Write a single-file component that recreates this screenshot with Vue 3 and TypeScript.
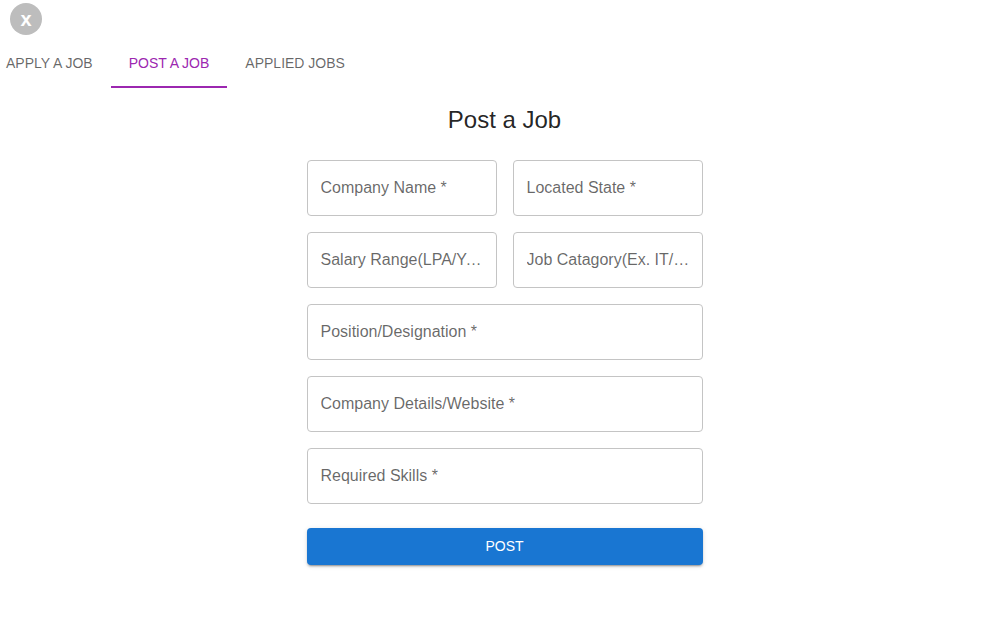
<script setup lang="ts">
import { reactive, ref } from 'vue'

interface Field {
  id: string
  label: string
  wide: boolean
}

const tabs: string[] = ['Apply a Job', 'Post a Job', 'Applied Jobs']
const active = ref(1)

const fields: Field[] = [
  { id: 'company', label: 'Company Name', wide: false },
  { id: 'state', label: 'Located State', wide: false },
  { id: 'salary', label: 'Salary Range(LPA/Year)', wide: false },
  { id: 'category', label: 'Job Catagory(Ex. IT/Bank)', wide: false },
  { id: 'position', label: 'Position/Designation', wide: true },
  { id: 'details', label: 'Company Details/Website', wide: true },
  { id: 'skills', label: 'Required Skills', wide: true },
]
const values = reactive<Record<string, string>>({})
</script>

<template>
  <div class="page">
    <header class="top">
      <div class="avatar">x</div>
    </header>
    <div class="tabs" role="tablist">
      <button
        v-for="(tab, i) in tabs"
        :key="tab"
        type="button"
        role="tab"
        class="tab"
        :class="{ active: i === active }"
        :aria-selected="i === active"
        @click="active = i"
      >{{ tab }}</button>
    </div>
    <main class="content">
      <h1 class="title">Post a Job</h1>
      <form class="form" @submit.prevent>
        <div class="grid">
          <div v-for="f in fields" :key="f.id" class="field" :class="{ wide: f.wide }">
            <input :id="f.id" v-model="values[f.id]" class="input" type="text" placeholder=" " required />
            <label :for="f.id" class="label">{{ f.label }}&nbsp;*</label>
          </div>
        </div>
        <button type="submit" class="submit">Post</button>
      </form>
    </main>
  </div>
</template>

<style>
body {
  margin: 0;
  background: #fff;
}
</style>

<style scoped>
.page {
  font-family: "Liberation Sans", Arial, sans-serif;
  color: rgba(0, 0, 0, 0.87);
}
.top {
  padding: 3px 10px 4px;
}
.avatar {
  display: flex;
  align-items: center;
  justify-content: center;
  width: 32px;
  height: 32px;
  border-radius: 50%;
  background: #bdbdbd;
  color: #fff;
  font-size: 20px;
  font-weight: 700;
  line-height: 20px;
}
.tabs {
  display: flex;
  height: 49px;
  overflow: hidden;
}
.tab {
  box-sizing: border-box;
  flex: none;
  padding: 0 18px;
  border: 0;
  border-bottom: 2px solid transparent;
  background: none;
  color: rgba(0, 0, 0, 0.6);
  font: 400 14px/18px "Liberation Sans", Arial, sans-serif;
  text-transform: uppercase;
  cursor: pointer;
}
.tab:first-child {
  padding-left: 6px;
}
.tab.active {
  color: #9c27b0;
  border-bottom-color: #9c27b0;
}
.content {
  box-sizing: border-box;
  max-width: 446px;
  margin: 0 auto;
  padding: 16px 24px 16px 26px;
}
.title {
  margin: 0;
  font-size: 24px;
  font-weight: 400;
  line-height: 32px;
  text-align: center;
}
.form {
  margin-top: 24px;
}
.grid {
  display: grid;
  grid-template-columns: 1fr 1fr;
  gap: 16px;
}
.field {
  position: relative;
  min-width: 0;
}
.wide {
  grid-column: 1 / -1;
}
.input {
  box-sizing: border-box;
  display: block;
  width: 100%;
  height: 56px;
  padding: 16px 14px;
  border: 1px solid #c4c4c4;
  border-radius: 4px;
  background: transparent;
  color: inherit;
  font: 400 16px/24px "Liberation Sans", Arial, sans-serif;
  outline: 0;
}
.input:focus {
  border-color: #1976d2;
}
.label {
  position: absolute;
  top: 16px;
  left: 14px;
  right: 10px;
  overflow: hidden;
  color: rgba(0, 0, 0, 0.6);
  font-size: 16px;
  line-height: 24px;
  white-space: nowrap;
  text-overflow: ellipsis;
  pointer-events: none;
}
.input:focus + .label,
.input:not(:placeholder-shown) + .label {
  top: -8px;
  right: auto;
  padding: 0 4px;
  background: #fff;
  font-size: 12px;
  line-height: 16px;
}
.submit {
  display: block;
  width: 100%;
  margin-top: 24px;
  padding: 6px 16px;
  border: 0;
  border-radius: 4px;
  background: #1976d2;
  box-shadow: 0 3px 1px -2px rgba(0, 0, 0, 0.2), 0 2px 2px 0 rgba(0, 0, 0, 0.14), 0 1px 5px 0 rgba(0, 0, 0, 0.12);
  color: #fff;
  font: 400 14px/25px "Liberation Sans", Arial, sans-serif;
  text-transform: uppercase;
  cursor: pointer;
}
</style>
